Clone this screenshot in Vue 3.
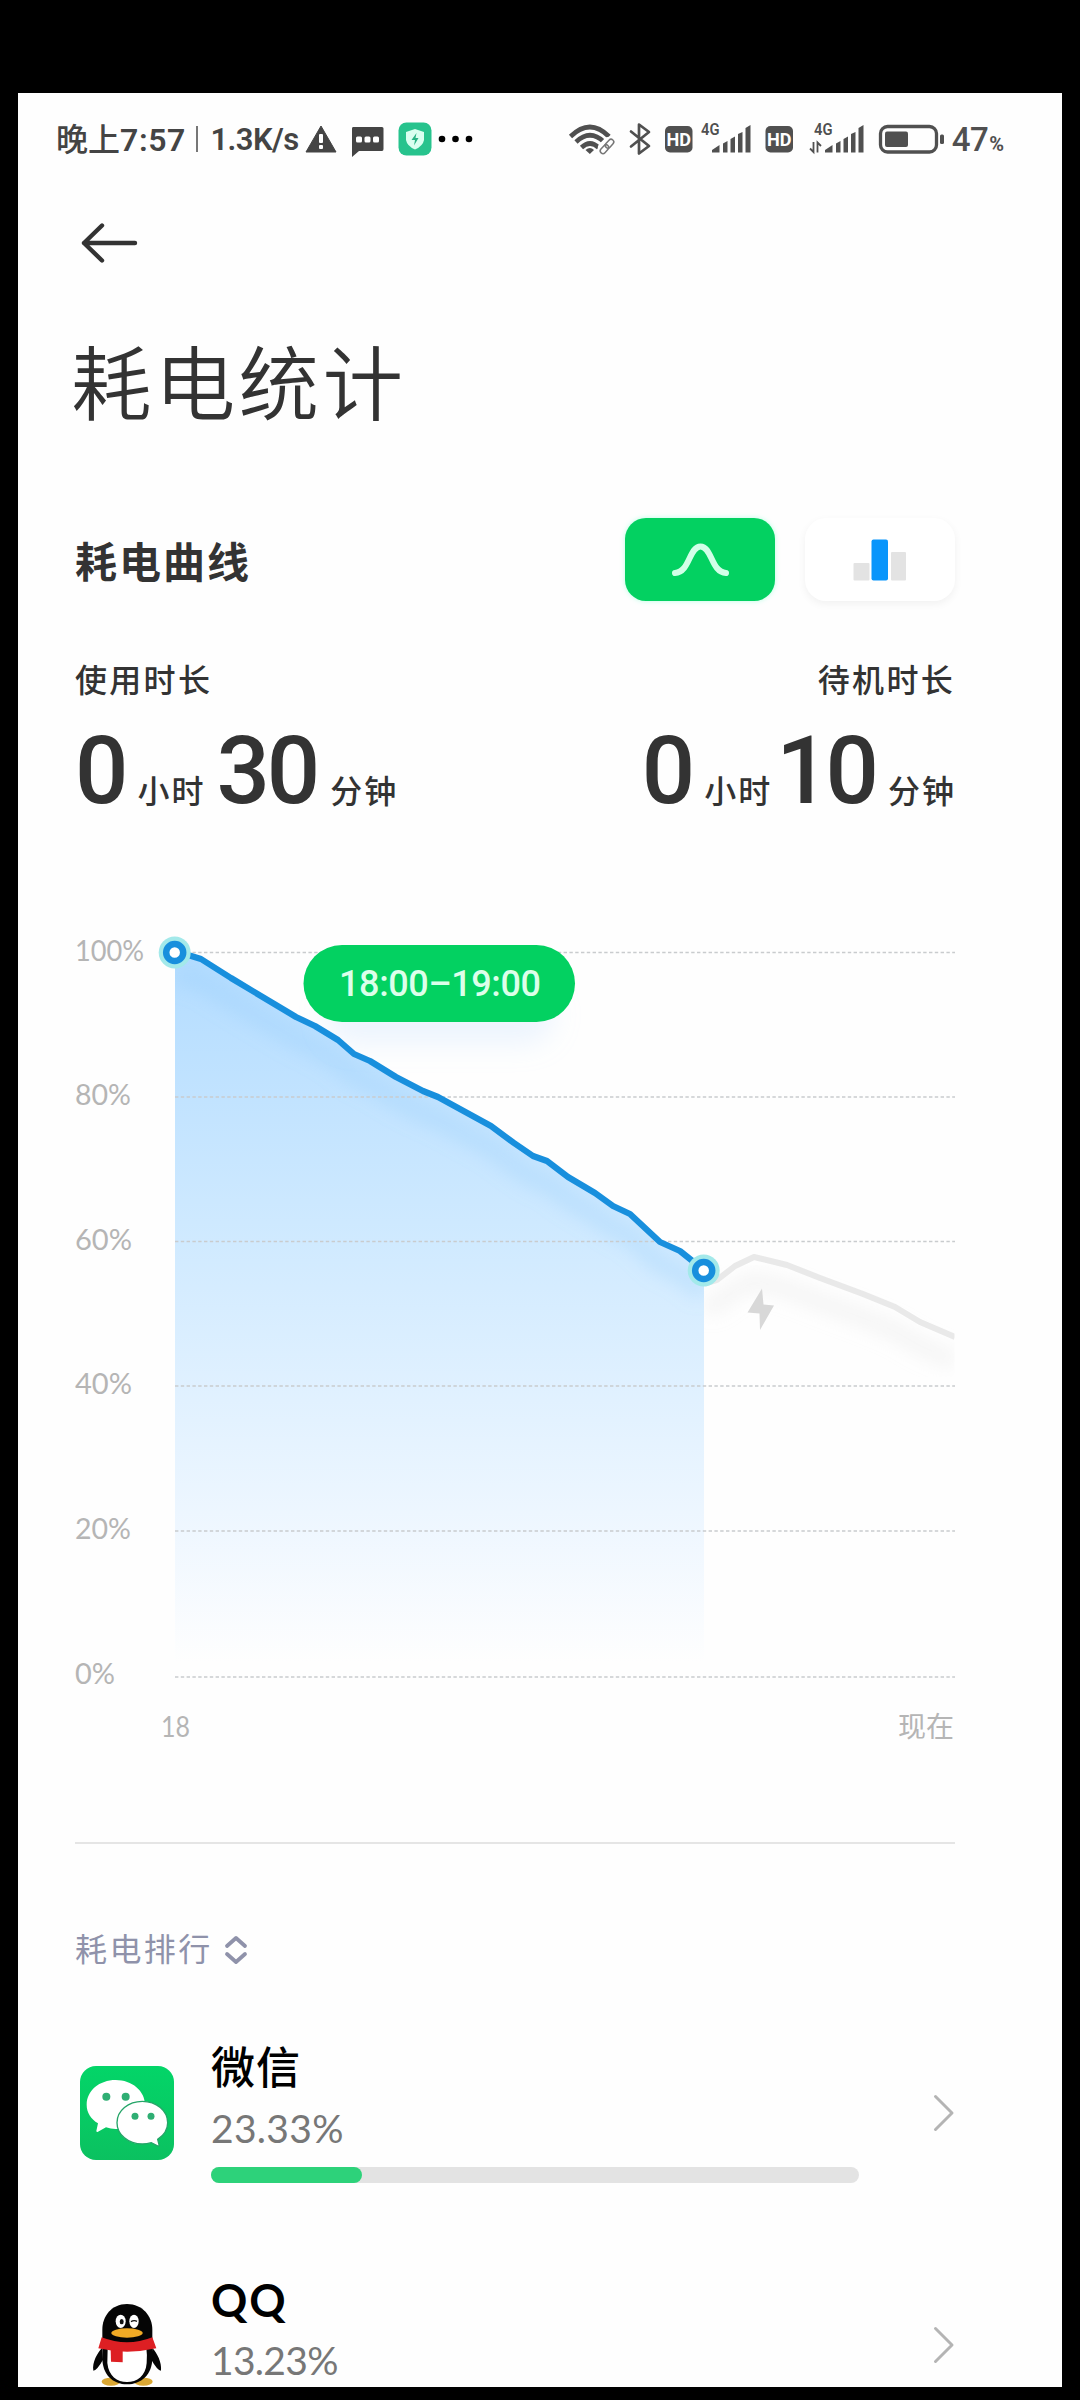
<script setup>
const gridLines = [
  { label: '100%', y: 952.5, ly: 960.5, w: 69 },
  { label: '80%', y: 1097, ly: 1105, w: 56 },
  { label: '60%', y: 1241.5, ly: 1249.5, w: 57 },
  { label: '40%', y: 1386, ly: 1394, w: 57 },
  { label: '20%', y: 1531, ly: 1539, w: 56 },
  { label: '0%', y: 1677, ly: 1683.5, w: 40 },
]

const usedPoints = [
  [175, 952.5], [188, 955], [201, 959], [231, 978], [296, 1017], [315, 1026], [338, 1040],
  [354, 1054], [370, 1061], [396, 1077], [423, 1091], [438, 1097], [491, 1126], [514, 1143],
  [533, 1156], [547, 1161], [568, 1177], [595, 1193], [613, 1206], [630, 1214], [660, 1242],
  [680, 1251], [695, 1263], [704, 1270.5],
]
const restPoints = [
  [704, 1284], [717, 1280], [735, 1266], [754, 1257], [787, 1265], [820, 1278], [863, 1294],
  [895, 1307], [920, 1322], [955, 1337],
]
const toLine = (pts) => pts.map((p) => p.join(',')).join(' ')
const usedLine = toLine(usedPoints)
const restLine = toLine(restPoints)
const usedArea = usedLine + ' 704,1677 175,1677'

const durations = [
  { title: '使用时长', hours: '0', minutes: '30', side: 'left' },
  { title: '待机时长', hours: '0', minutes: '10', side: 'right' },
]

const apps = [
  { id: 'wechat', name: '微信', percent: '23.33%' },
  { id: 'qq', name: 'QQ', percent: '13.23%' },
]
</script>

<template>
  <div class="frame">
    <div class="screen">
      <header class="status">
        <div class="status-left">
          <span class="cjk">晚上</span><span class="clock">7:57</span>
          <i class="bar"></i>
          <span class="speed">1.3K/s</span>
          <svg class="warn" width="32" height="28" viewBox="0 0 32 28">
            <path d="M16 1 31 27H1Z" fill="#444" stroke="#444" stroke-linejoin="round" />
            <rect x="14" y="9" width="4" height="9" rx="1" fill="#fff" />
            <rect x="14" y="20" width="4" height="4" rx="1" fill="#fff" />
          </svg>
          <svg class="msg" width="33" height="30" viewBox="0 0 33 30">
            <path d="M2 0H31Q32.500 0 32.500 1.500V22Q32.500 24 31 24H8L1 30V1.500Q1 0 2 0Z" fill="#444" />
            <rect x="5" y="9.500" width="6" height="6" rx="1.500" fill="#fff" />
            <rect x="13.500" y="9.500" width="6" height="6" rx="1.500" fill="#fff" />
            <rect x="22" y="9.500" width="6" height="6" rx="1.500" fill="#fff" />
          </svg>
          <svg class="shield" width="34" height="34" viewBox="0 0 34 34">
            <rect x="0.500" y="0.500" width="33" height="33" rx="8" fill="#27c38d" />
            <path d="M17 7 26 10V18Q25 24 17 27.500Q9 24 8 18V10Z" fill="#d9fff0" />
            <path d="M18.500 11 13.500 18H17L16 23.500 20.500 16H17.500Z" fill="#27b384" />
          </svg>
          <svg class="more" width="36" height="8" viewBox="0 0 36 8">
            <circle cx="4" cy="4" r="3.300" /><circle cx="17.500" cy="4" r="3.300" /><circle cx="31" cy="4" r="3.300" />
          </svg>
        </div>

        <div class="status-right">
          <svg width="60" height="42" viewBox="563 118 60 42">
            <g fill="none" stroke="#505050" stroke-width="4.600">
              <path d="M568.500 136.500Q588 117.500 607 136.500" />
              <path d="M574 142Q588 128.500 602 142" />
              <path d="M579.500 147.500Q588 139.500 596.500 147.500" />
            </g>
            <path d="M583.500 150Q588 146 592 150L587.800 154Z" fill="#505050" />
            <g fill="none" stroke="#fff" stroke-width="6">
              <rect x="598" y="142" width="14" height="7.500" rx="3.700" transform="rotate(-45 605 146)" />
            </g>
            <g fill="none" stroke="#777" stroke-width="1.500">
              <rect x="602.500" y="141" width="10" height="5.400" rx="2.700" transform="rotate(-48 607.500 143.700)" />
              <rect x="597.500" y="146.500" width="10" height="5.400" rx="2.700" transform="rotate(-48 602.500 149.200)" />
            </g>
          </svg>
          <svg width="37" height="42" viewBox="623 118 37 42">
            <path d="M629 131.500 647 146 637 153.500V124.500L647 132 629 146.500" fill="none" stroke="#505050" stroke-width="2.700" stroke-linejoin="round" stroke-linecap="round" />
          </svg>
          <svg width="98" height="42" viewBox="660 118 98 42">
            <rect x="663" y="126" width="27.500" height="26.500" rx="5" fill="#505050" />
            <text x="664.500" y="146" class="hd" textLength="24.500" lengthAdjust="spacingAndGlyphs">HD</text>
            <text x="699" y="134.500" class="net" textLength="18.500" lengthAdjust="spacingAndGlyphs">4G</text>
            <path d="M710 152.500V150L717.500 145V152.500ZM721 152.500V143.500L725.500 141V152.500ZM728.500 152.500V139L733 136.500V152.500ZM736 152.500V134L740.500 132V152.500ZM743.500 152.500V128L748.500 125V152.500Z" fill="#505050" />
          </svg>
          <svg width="112" height="42" viewBox="758 118 112 42">
            <rect x="763.500" y="126" width="27.500" height="26.500" rx="5" fill="#505050" />
            <text x="765" y="146" class="hd" textLength="24.500" lengthAdjust="spacingAndGlyphs">HD</text>
            <text x="812" y="134.500" class="net" textLength="18.500" lengthAdjust="spacingAndGlyphs">4G</text>
            <path d="M811.500 142V152L808 148.500M815.500 152.500V142.500L819 146" fill="none" stroke="#505050" stroke-width="1.800" />
            <path d="M823 152.500V150L830.500 145V152.500ZM834 152.500V143.500L838.500 141V152.500ZM841.500 152.500V139L846 136.500V152.500ZM849 152.500V134L853.500 132V152.500ZM856.500 152.500V128L861.500 125V152.500Z" fill="#505050" />
          </svg>
          <svg width="80" height="42" viewBox="870 118 80 42">
            <rect x="878.500" y="126.500" width="56" height="25.500" rx="7" fill="none" stroke="#505050" stroke-width="3.300" />
            <rect x="883" y="131.500" width="23" height="15.500" rx="2" fill="#505050" />
            <rect x="938" y="134.500" width="4" height="9.500" rx="1.500" fill="#505050" />
          </svg>
          <span class="level">47</span><span class="pct">%</span>
        </div>
      </header>

      <nav class="nav">
        <svg width="60" height="44" viewBox="0 0 60 44">
          <path d="M55 22H4M22 4.500 4 22 22 39.500" fill="none" stroke="#333" stroke-width="4.400" stroke-linecap="round" stroke-linejoin="round" />
        </svg>
      </nav>

      <h1 class="title">耗电统计</h1>

      <section class="curve-head">
        <h2>耗电曲线</h2>
        <div class="toggle">
          <button class="tab active">
            <svg width="60" height="38" viewBox="0 0 60 38">
              <path d="M5 32C20 31 19 5.500 30.500 5.500S41 31 56 32" fill="none" stroke="#d2ffe8" stroke-width="6" stroke-linecap="round" />
            </svg>
          </button>
          <button class="tab">
            <svg width="54" height="42" viewBox="0 0 54 42">
              <rect x="0.500" y="24" width="16" height="17.500" rx="1" fill="#e3e3e3" />
              <rect x="38" y="13" width="15" height="28.500" rx="1" fill="#e3e3e3" />
              <rect x="18.500" y="0.500" width="16.500" height="41" rx="2" fill="#0895fb" />
            </svg>
          </button>
        </div>
      </section>

      <section class="durations">
        <div v-for="d in durations" :key="d.title" class="duration" :class="d.side">
          <div class="d-title">{{ d.title }}</div>
          <div class="d-value">
            <b class="h">{{ d.hours }}</b><span>小时</span>
            <b class="m">{{ d.minutes }}</b><span class="min-unit">分钟</span>
          </div>
        </div>
      </section>

      <svg class="chart" width="920" height="840" viewBox="60 920 920 840">
        <defs>
          <linearGradient id="area" x1="0" y1="952" x2="0" y2="1677" gradientUnits="userSpaceOnUse">
            <stop offset="0" stop-color="#b3dcff" />
            <stop offset="0.400" stop-color="#d0eaff" />
            <stop offset="0.800" stop-color="#eff7ff" />
            <stop offset="0.980" stop-color="#fefefe" />
          </linearGradient>
          <clipPath id="areaClip"><polygon :points="usedArea" /></clipPath>
          <clipPath id="restClip"><rect x="704" y="1200" width="250.500" height="300" /></clipPath>
          <filter id="soft" x="-20%" y="-20%" width="140%" height="140%"><feGaussianBlur stdDeviation="9" /></filter>
          <filter id="pillSoft" x="-20%" y="-60%" width="140%" height="260%"><feGaussianBlur stdDeviation="13" /></filter>
        </defs>
        <polygon :points="usedArea" fill="url(#area)" />
        <g clip-path="url(#areaClip)">
          <polyline :points="usedLine" transform="translate(0 22)" fill="none" stroke="#8fc8f7" stroke-opacity=".28" stroke-width="20" filter="url(#soft)" />
        </g>
        <g clip-path="url(#restClip)">
          <polyline :points="restLine" transform="translate(0 24)" fill="none" stroke="#ddd" stroke-opacity=".28" stroke-width="18" filter="url(#soft)" />
        </g>
        <g v-for="g in gridLines" :key="g.label">
          <line x1="175" x2="955" :y1="g.y" :y2="g.y" stroke="#c9ccce" stroke-width="1.500" stroke-dasharray="3.400 2.400" />
          <text x="75" :y="g.ly" class="axis" :textLength="g.w" lengthAdjust="spacingAndGlyphs">{{ g.label }}</text>
        </g>
        <g clip-path="url(#restClip)">
          <polyline :points="restLine" fill="none" stroke="#e9e9e9" stroke-width="6" stroke-linejoin="round" />
        </g>
        <polygon points="762,1288.500 763.500,1304.500 774,1305.500 760,1330 759.500,1313.500 747.500,1312.500" fill="#d8d8d8" />
        <rect x="325" y="985" width="230" height="60" rx="30" fill="#bcdcff" fill-opacity=".25" filter="url(#pillSoft)" />
        <polyline :points="usedLine" fill="none" stroke="#188fdd" stroke-width="6.200" stroke-linejoin="round" />
        <g>
          <circle cx="174.700" cy="952.500" r="16" fill="#a3e9ea" />
          <circle cx="174.700" cy="952.500" r="8.500" fill="#fff" stroke="#188fdd" stroke-width="6.500" />
          <circle cx="703.700" cy="1270.500" r="16" fill="#a3e9ea" />
          <circle cx="703.700" cy="1270.500" r="8.500" fill="#fff" stroke="#188fdd" stroke-width="6.500" />
        </g>
        <rect x="303.500" y="945" width="271.500" height="77" rx="38.500" fill="#03d161" />
        <text x="339" y="996" class="pill" textLength="202">18:00–19:00</text>
        <text x="161" y="1736.500" class="axis" textLength="29" lengthAdjust="spacingAndGlyphs">18</text>
        <text x="898" y="1736.500" class="axis now">现在</text>
      </svg>

      <div class="divider"></div>

      <div class="rank-head">
        <span>耗电排行</span>
        <svg width="24" height="30" viewBox="0 0 24 30">
          <path d="M3 11 12 3 21 11M3 19 12 27 21 19" fill="none" stroke="#8f92aa" stroke-width="3.800" stroke-linecap="round" stroke-linejoin="round" />
        </svg>
      </div>

      <ul class="apps">
        <li v-for="app in apps" :key="app.id" class="app" :class="app.id">
          <div class="app-icon">
            <svg v-if="app.id === 'wechat'" width="94" height="94" viewBox="0 0 282 282">
              <defs>
                <linearGradient id="wx" x1="0" y1="0" x2="0" y2="1">
                  <stop offset="0" stop-color="#03d568" /><stop offset="1" stop-color="#0bc160" />
                </linearGradient>
              </defs>
              <rect width="282" height="282" rx="48" fill="url(#wx)" />
              <path d="M107 42C58 42 20 74 20 116C20 140 33 159 54 172L49 195Q50 200 54 197L78 184Q92 189 107 189C156 189 195 157 195 116S156 42 107 42Z" fill="#fff" />
              <circle cx="79" cy="92" r="12" fill="#2fae73" /><circle cx="137" cy="92" r="12" fill="#2fae73" />
              <path d="M187 106C145 106 111 134 111 170S145 234 187 234Q201 234 214 230L234 240Q238 241 237 236L233 220C251 208 263 191 263 170C263 134 229 106 187 106Z" fill="#fff" stroke="#25a568" stroke-width="4" />
              <circle cx="165" cy="151" r="10.500" fill="#2fae73" /><circle cx="213" cy="151" r="10.500" fill="#2fae73" />
            </svg>
            <svg v-else width="72" height="84" viewBox="154 850 216 252">
              <ellipse cx="214" cy="1086" rx="28" ry="12" fill="#dba834" />
              <ellipse cx="311" cy="1086" rx="28" ry="12" fill="#dba834" />
              <path d="M187 985C173 1000 157 1028 161 1053Q172 1052 190 1020ZM338 985C352 1000 367 1028 364 1053Q353 1052 335 1020Z" fill="#050505" />
              <path d="M262 853C215 853 188 890 188 930V1015C188 1065 220 1094 262 1094S338 1065 338 1015V930C338 890 309 853 262 853Z" fill="#050505" />
              <path d="M204 985H320Q323 1005 321 1030C318 1070 292 1087 262 1087S207 1070 203 1030Z" fill="#fff" />
              <path d="M186 953Q262 983 338 953L350 986Q262 1006 176 986Z" fill="#dd1f23" />
              <path d="M213 988 249 992V1028L214 1026Z" fill="#dd1f23" />
              <ellipse cx="262" cy="940" rx="47" ry="14" fill="#f0aa25" />
              <ellipse cx="243" cy="905" rx="15" ry="20" fill="#fff" /><ellipse cx="283" cy="905" rx="14" ry="20" fill="#fff" />
              <ellipse cx="246" cy="906" rx="6" ry="8" fill="#111" />
              <path d="M274 906Q283 900 292 905" fill="none" stroke="#111" stroke-width="4" />
            </svg>
          </div>
          <div class="app-info">
            <div class="app-name">{{ app.name }}</div>
            <div class="app-pct">{{ app.percent }}</div>
            <div class="track"><div class="fill" :style="{ width: app.percent }"></div></div>
          </div>
          <svg class="go" width="22" height="40" viewBox="0 0 22 40">
            <path d="M2.500 3.500 19 20 2.500 36.500" fill="none" stroke="#b4b4b4" stroke-width="3" stroke-linecap="round" stroke-linejoin="round" />
          </svg>
        </li>
      </ul>
    </div>
  </div>
</template>

<style>
body { background: #000; }
</style>

<style scoped>
.frame {
  width: 1080px; height: 2400px; box-sizing: border-box; padding: 93px 18px 13px;
  background: #000; overflow: hidden; color: #333;
  font-family: Roboto, "Noto Sans CJK SC", sans-serif;
}
.screen { height: 2294px; background: #fefefe; overflow: hidden; display: flex; flex-direction: column; }
.screen > * { flex-shrink: 0; }
.status { height: 92px; display: flex; align-items: center; justify-content: space-between; padding: 0 58px 0 38px; color: #444; white-space: nowrap; }
.status-left, .status-right { display: flex; align-items: center; }
.cjk { font-size: 32px; font-weight: 500; line-height: 40px; margin-top: 1px; }
.clock { font-size: 32px; font-weight: 600; letter-spacing: .6px; line-height: 40px; margin-top: 2px; }
.bar { width: 2.500px; height: 26px; background: #777; margin: 0 12px 0 10px; }
.speed { font-size: 31px; font-weight: 600; line-height: 40px; margin-top: 2px; width: 95px; letter-spacing: -.6px; }
.msg { margin: 5px 0 0 14px; }
.shield { margin-left: 14px; }
.more { margin-left: 6px; }
.hd { font: 700 19px Roboto, sans-serif; fill: #fff; }
.net { font: 600 16.500px Roboto, sans-serif; fill: #505050; }
.level { font-size: 33px; font-weight: 500; line-height: 40px; margin-top: 1px; letter-spacing: -.5px; color: #505050; }
.pct { font-size: 20px; font-weight: 700; line-height: 40px; margin: 9px 0 0 1px; color: #505050; }
.nav { height: 116px; display: flex; align-items: center; padding-left: 62px; }
.title { height: 160px; line-height: 160px; margin: 0; padding: 6px 0 0 53px; font-size: 80.500px; font-weight: 350; letter-spacing: 3.300px; }
.title { height: 160px; }
.curve-head { height: 185px; display: flex; align-items: center; justify-content: space-between; padding: 0 107px 0 57px; }
.curve-head h2 { margin: 0; font-size: 42px; font-weight: 600; letter-spacing: 2px; }
.toggle { display: flex; gap: 30px; }
.tab { width: 150px; height: 83px; padding: 0; border: 0; border-radius: 21px; background: #fff; display: flex; align-items: center; justify-content: center; box-shadow: 0 3px 9px rgba(0, 0, 0, .055); }
.tab.active { background: #03d161; box-shadow: 0 0 5px rgba(80, 255, 190, .4); }
.durations { display: flex; justify-content: space-between; padding: 0 107px 0 57px; white-space: nowrap; }
.duration.right { text-align: right; }
.d-title { height: 55px; padding-top: 1px; line-height: 56px; font-size: 32px; font-weight: 500; letter-spacing: 2.300px; }
.d-value { display: flex; align-items: baseline; margin-top: 13px; height: 100px; }
.d-value b { font-size: 94px; font-weight: 500; line-height: 100px; }
.d-value span { font-size: 32px; font-weight: 500; letter-spacing: 2px; margin-left: 9px; width: 67px; text-align: left; }
.d-value .m { margin-left: 12px; letter-spacing: -3px; }
.d-value .min-unit { margin-left: 13px; }
.right .d-value { justify-content: flex-end; }
.right .d-value .m { margin-left: 5px; letter-spacing: -4px; }
.chart { display: block; margin: 99px 0 0 42px; }
.axis { font: 400 28px Lato, "Noto Sans CJK SC", sans-serif; fill: #b5b5b5; }
.now { font-size: 28px; }
.pill { font: 500 36px Roboto, sans-serif; fill: #dcffea; }
.divider { height: 2px; margin: 82px 107px 0 57px; background: #e5e5e5; }
.rank-head { height: 40px; margin: 86px 0 0 57px; display: flex; align-items: center; gap: 11px; color: #8f92aa; font-size: 32px; letter-spacing: 2.400px; line-height: 42px; }
.apps { list-style: none; margin: 27px 0 0; padding: 0; }
.app { height: 232px; display: flex; align-items: center; }
.app-icon { margin-left: 62px; width: 94px; display: flex; justify-content: center; }
.app-info { margin-left: 37px; width: 648px; }
.app-name { height: 50px; line-height: 53px; font-size: 44px; font-weight: 500; color: #000; letter-spacing: 1px; }
.qq .app-name { font-family: Lato, sans-serif; font-weight: 700; font-size: 45px; line-height: 50px; letter-spacing: 2px; }
.app-pct { height: 40px; line-height: 41px; margin-top: 15px; font-family: Lato, sans-serif; font-size: 39px; color: #777; letter-spacing: .3px; }
.qq .app-pct { letter-spacing: -.7px; }
.track { height: 16px; margin-top: 19px; border-radius: 8px; background: #e3e3e3; }
.fill { height: 16px; border-radius: 8px; background: #2dd27a; }
.go { margin-left: 74px; }
</style>
